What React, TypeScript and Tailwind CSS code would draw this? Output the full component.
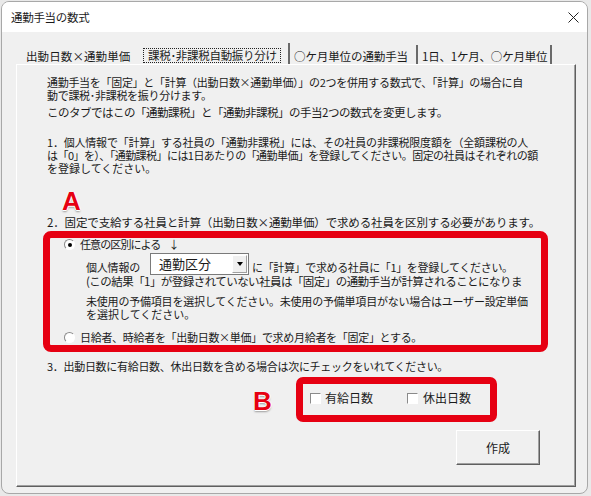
import React from "react"

function Radio({ checked }: { checked?: boolean }) {
  return (
    <span className="w-[11px] h-[11px] rounded-full border border-[#8a8a8a] border-b-white border-r-white bg-white flex items-center justify-center shrink-0">
      {checked && <span className="w-[4px] h-[4px] rounded-full bg-black" />}
    </span>
  )
}

function Check() {
  return <span className="block w-[11px] h-[11px] border border-[#8a8a8a] border-b-white border-r-white bg-white shrink-0" />
}

function Mark({ ch }: { ch: string }) {
  return (
    <span className="block w-[20px] text-[26px] leading-[26px] font-bold font-['Liberation_Sans',sans-serif] text-[#e60012] [text-shadow:0_1px_0_#fff,1px_0_0_#fff,-1px_0_0_#fff,0_2px_2px_rgba(0,0,0,0.35)]">
      {ch}
    </span>
  )
}

export default function App() {
  return (
    <div className="w-[591px] h-[496px] bg-[#e9e9e9] pl-px pt-px font-['Noto_Sans_CJK_JP','Noto_Sans',sans-serif] text-[#1a1a1a] overflow-hidden">
      <div className="w-[587px] h-[493px] rounded-lg border border-[#a8a8a8] bg-[#f0f0f0] overflow-hidden flex flex-col">
        {/* title bar */}
        <div className="h-[30px] shrink-0 bg-white flex items-center justify-between pl-[9px] pr-[8px]">
          <span className="text-[11.5px] leading-[14px] tracking-[-0.3px]">通勤手当の数式</span>
          <svg width="11" height="11" viewBox="0 0 11 11" className="mt-[1px]">
            <path d="M0.5 0.5 L10.5 10.5 M10.5 0.5 L0.5 10.5" stroke="#222" strokeWidth="1" />
          </svg>
        </div>

        <div className="pl-[14px] pt-[11px]">
          {/* tabs */}
          <div className="flex items-end h-[21px] text-[11.5px] leading-[14px] whitespace-nowrap">
            <div className="w-[124px] h-[19px] flex items-end pl-[10px] pb-px tracking-[0.1px]">出動日数×通勤単価</div>
            <div className="w-[150px] h-[21px] flex items-end border-r-2 border-[#6a6a6a] pb-px">
              <span className="ml-[3px] border border-dotted border-[#222] pl-[4px] pr-[3px] leading-[13px] tracking-[-0.3px]">課税･非課税自動振り分け</span>
            </div>
            <div className="w-[128px] h-[19px] flex items-end pl-[4px] pb-px border-r-2 border-[#6a6a6a] tracking-[-0.1px]">○ケ月単位の通勤手当</div>
            <div className="w-[134px] h-[19px] flex items-end pl-[4px] pb-px border-r-2 border-[#6a6a6a] tracking-[-0.2px]">1日、1ケ月、○ケ月単位</div>
          </div>

          {/* panel */}
          <div className="w-[560px] h-[423px] border-t border-l border-white border-r border-b border-r-[#5f5f5f] border-b-[#5f5f5f] shadow-[inset_-1px_-1px_0_#a0a0a0] pl-[30px] pt-[11px] text-[11px] leading-[13px] whitespace-nowrap">
            <div className="tracking-[-0.3px]">通勤手当を「固定」と「計算（出動日数×通勤単価）」の2つを併用する数式で、「計算」の場合に自</div>
            <div className="tracking-[-0.3px]">動で課税･非課税を振り分けます。</div>
            <div className="mt-[3px] text-[11.5px] leading-[15px] tracking-[-0.5px]">このタブではこの「通勤課税」と「通勤非課税」の手当2つの数式を変更します。</div>

            <div className="mt-[16px] tracking-[-0.2px]">1．個人情報で「計算」する社員の「通勤非課税」には、その社員の非課税限度額を（全額課税の人</div>
            <div className="tracking-[-0.55px]">は「0」を）、「通勤課税」には1日あたりの「通勤単価」を登録してください。固定の社員はそれぞれの額</div>
            <div>を登録してください。</div>

            <div className="mt-[13px] ml-[15px] h-[26px]"><Mark ch="A" /></div>

            <div className="mt-[2px] text-[11.5px] tracking-[-0.15px]">2．固定で支給する社員と計算（出動日数×通勤単価）で求める社員を区別する必要があります。</div>

            <div className="relative mt-[2px] -ml-[4px] w-[505px] h-[121px] border-[7px] border-[#e60012] rounded-[8px] overflow-hidden">
              <div className="flex items-center gap-[5px] pl-[14px] h-[13px]">
                <Radio checked />
                <span className="tracking-[-0.9px]">任意の区別による</span>
                <span className="ml-[3px]">↓</span>
              </div>
              <div className="mt-[2px] flex items-end pl-[36px] h-[22px]">
                <span className="pb-px tracking-[-0.2px]">個人情報の</span>
                <div className="ml-[10px] w-[99px] h-[22px] border border-[#7a7a7a] bg-white flex items-center">
                  <span className="pl-[8px] text-[13px] leading-[16px] flex-1">通勤区分</span>
                  <span className="w-[15px] h-[18px] mr-px bg-[#f0f0f0] border border-white border-r-[#a0a0a0] border-b-[#a0a0a0] flex items-center justify-center">
                    <span className="w-0 h-0 border-l-[3.5px] border-r-[3.5px] border-t-[4px] border-l-transparent border-r-transparent border-t-black" />
                  </span>
                </div>
                <span className="ml-[3px] pb-px tracking-[-0.35px]">に「計算」で求める社員に「1」を登録してください。</span>
              </div>
              <div className="pl-[36px] text-[11.5px] leading-[12px] tracking-[-0.55px]">(この結果「1」が登録されていない社員は「固定」の通勤手当が計算されることになりま</div>
              <div className="mt-[8px] pl-[36px] tracking-[-0.2px]">未使用の予備項目を選択してください。未使用の予備単項目がない場合はユーザー設定単価</div>
              <div className="pl-[36px]">を選択してください。</div>
              <div className="mt-[10px] flex items-center gap-[5px] pl-[14px] h-[13px]">
                <Radio />
                <span className="tracking-[-0.3px]">日給者、時給者を「出動日数×単価」で求め月給者を「固定」とする。</span>
              </div>
            </div>

            <div className="mt-[8px] tracking-[-0.3px]">3．出動日数に有給日数、休出日数を含める場合は次にチェックをいれてください。</div>

            <div className="mt-[4px] flex items-start">
              <div className="ml-[206px] mt-[11px]"><Mark ch="B" /></div>
              <div className="relative ml-[23px] w-[201px] h-[45px] border-[7px] border-[#e60012] rounded-[7px] bg-[#f0f0f0] flex items-center pl-[7px] pb-[3px] text-[12px] leading-[14px]">
                <Check />
                <span className="ml-[4px]">有給日数</span>
                <span className="ml-[34px]"><Check /></span>
                <span className="ml-[5px]">休出日数</span>
              </div>
            </div>

            <div className="mt-[8px] ml-[409px] w-[84px] h-[35px] bg-[#f0f0f0] border border-white border-r-[#5f5f5f] border-b-[#5f5f5f] shadow-[inset_-1px_-1px_0_#a0a0a0] flex items-center justify-center text-[12px] leading-[14px]">
              作成
            </div>
          </div>
        </div>
      </div>
    </div>
  )
}
